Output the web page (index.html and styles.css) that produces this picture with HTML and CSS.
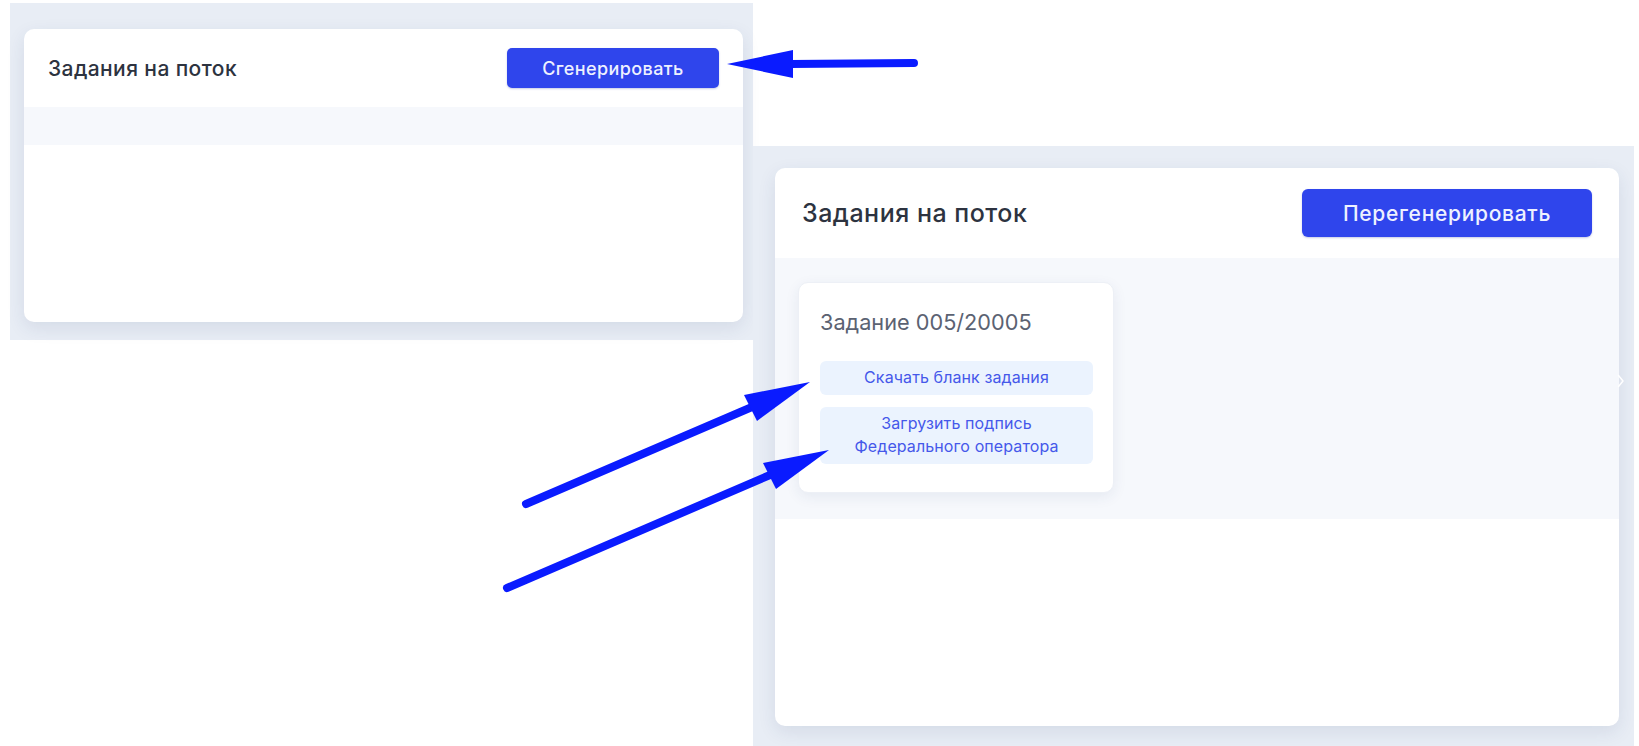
FILE: index.html
```html
<!DOCTYPE html>
<html lang="ru">
<head>
<meta charset="utf-8">
<title>Задания на поток</title>
<link rel="stylesheet" href="styles.css">
</head>
<body>
<div class="canvas">
  <section class="shot shot-left">
    <div class="card card-sm">
      <div class="card-head">
        <h2 class="card-title">Задания на поток</h2>
        <button class="btn-primary">Сгенерировать</button>
      </div>
      <div class="card-strip"></div>
      <div class="card-rest"></div>
    </div>
  </section>

  <section class="shot shot-right">
    <div class="card card-lg">
      <div class="card-head">
        <h2 class="card-title">Задания на поток</h2>
        <button class="btn-primary">Перегенерировать</button>
      </div>
      <div class="card-body">
        <div class="task">
          <div class="task-title">Задание 005/20005</div>
          <div class="task-actions">
            <button class="btn-soft">Скачать бланк задания</button>
            <button class="btn-soft">Загрузить подпись<br>Федерального оператора</button>
          </div>
        </div>
      </div>
      <div class="card-rest"></div>
    </div>
    <svg class="chevron" width="8" height="14" viewBox="0 0 8 14"><path d="M1.5 1.5 L6 7 L1.5 12.5" fill="none" stroke="#ffffff" stroke-width="1.5" stroke-linecap="round" stroke-linejoin="round"/></svg>
  </section>

  <svg class="arrows" width="1639" height="746" viewBox="0 0 1639 746">
    <g stroke="#0a1bff" stroke-width="8" stroke-linecap="round" fill="none">
      <line x1="914" y1="63" x2="790" y2="64"/>
      <line x1="526" y1="504" x2="752" y2="407"/>
      <line x1="507" y1="588" x2="770" y2="475"/>
    </g>
    <g fill="#0a1bff">
      <polygon points="727,64 793,50 793,78"/>
      <polygon points="810,382 744,395 757,421"/>
      <polygon points="829,450 763,463 776,489"/>
    </g>
  </svg>
</div>
</body>
</html>
```

FILE: styles.css
```css
* { box-sizing: border-box; }

html, body {
  margin: 0;
  padding: 0;
  background: #ffffff;
}

body {
  font-family: Inter, "Noto Sans", "Liberation Sans", sans-serif;
  color: #2b313d;
}

.canvas {
  position: relative;
  width: 1639px;
  height: 746px;
  overflow: hidden;
}

/* the two screenshots are windows placed on a free canvas */
.shot {
  position: absolute;
  background: #e8edf5;
  display: flex;
}

.shot-left {
  left: 10px;
  top: 3px;
  width: 743px;
  height: 337px;
  padding: 26px 10px 18px 14px;
}

.shot-right {
  left: 753px;
  top: 146px;
  width: 881px;
  height: 600px;
  padding: 22px 15px 20px 22px;
}

.card {
  flex: 1;
  background: #ffffff;
  border-radius: 10px;
  box-shadow: 0 6px 18px rgba(40, 60, 110, 0.10);
  display: flex;
  flex-direction: column;
  overflow: hidden;
}

.card-head {
  display: flex;
  align-items: center;
  justify-content: space-between;
}

.card-title {
  margin: 0;
  font-weight: 500;
  color: #2d3340;
}

.btn-primary {
  font-family: inherit;
  border: none;
  background: #2f45ec;
  color: #eef1ff;
  font-weight: 500;
  border-radius: 5px;
  box-shadow: 0 1px 2px rgba(30, 50, 160, 0.25);
  cursor: pointer;
}

/* small (left) screenshot */
.card-sm .card-head {
  height: 78px;
  padding: 0 24px;
}
.card-sm .card-title {
  font-size: 21px;
  letter-spacing: 0.4px;
}
.card-sm .btn-primary {
  width: 212px;
  height: 40px;
  font-size: 18px;
  letter-spacing: 0.4px;
}
.card-sm .card-strip {
  height: 38px;
  background: #f6f8fc;
}

.card-rest { flex: 1; }

/* large (right) screenshot */
.card-lg .card-head {
  height: 90px;
  padding: 0 27px;
}
.card-lg .card-title {
  font-size: 25px;
  letter-spacing: 0.5px;
}
.card-lg .btn-primary {
  width: 290px;
  height: 48px;
  font-size: 21px;
  letter-spacing: 0.7px;
  border-radius: 6px;
}
.card-lg .card-body {
  height: 261px;
  background: #f6f8fc;
  padding: 24px 23px;
  display: flex;
  align-items: flex-start;
}

.task {
  width: 316px;
  height: 211px;
  background: #ffffff;
  border: 1px solid #edf0f6;
  border-radius: 10px;
  box-shadow: 0 4px 14px rgba(40, 60, 110, 0.08);
  padding: 26px 21px 0 21px;
}

.task-title {
  font-size: 21.7px;
  line-height: 26px;
  color: #5b6272;
}

.task-actions {
  margin-top: 26px;
  display: flex;
  flex-direction: column;
  gap: 12px;
}

.btn-soft {
  font-family: inherit;
  border: none;
  background: #ebf3fe;
  color: #4558ea;
  font-size: 16px;
  letter-spacing: 0.1px;
  line-height: 23px;
  padding: 5px 4px 6px;
  border-radius: 6px;
  text-align: center;
  width: 273px;
}

.chevron {
  position: absolute;
  left: 864px;
  top: 228px;
}

.arrows {
  position: absolute;
  left: 0;
  top: 0;
  pointer-events: none;
}
```
